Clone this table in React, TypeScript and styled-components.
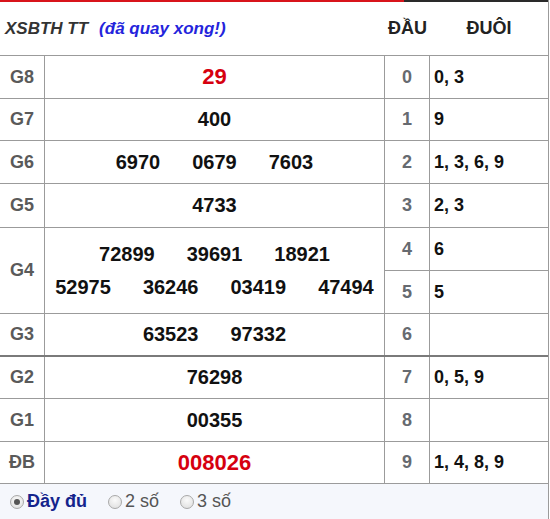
import React from "react";
import styled, { createGlobalStyle } from "styled-components";

const Global = createGlobalStyle`
  html, body { margin: 0; padding: 0; background: #ffffff; }
  body { font-family: "Liberation Sans", Arial, sans-serif; }
  * { box-sizing: border-box; }
`;

const LINE = "#9b9b9b";

const Widget = styled.div`
  width: 549px;
  border-right: 1px solid ${LINE};
  background: #fff;
`;

const TopBar = styled.div`
  display: flex;
  height: 2px;
`;

const TopSeg = styled.div<{ $color: string; $w?: number }>`
  height: 2px;
  background: ${(p) => p.$color};
  ${(p) => (p.$w ? `width: ${p.$w}px;` : "flex: 1;")}
`;

const Header = styled.div`
  display: flex;
  height: 54px;
  border-bottom: 1px solid ${LINE};
  align-items: center;
`;

const TitleCell = styled.div`
  width: 385px;
  padding-left: 5px;
  display: flex;
  align-items: center;
  white-space: nowrap;
`;

const Title = styled.span`
  font-style: italic;
  font-weight: bold;
  font-size: 17px;
  color: #333;
`;

const Status = styled.span`
  font-style: italic;
  font-weight: bold;
  font-size: 17px;
  color: #2424dc;
  margin-left: 11px;
`;

const HeadCell = styled.div<{ $w: number }>`
  width: ${(p) => p.$w}px;
  text-align: center;
  font-weight: bold;
  font-size: 18px;
  color: #222;
`;

const Row = styled.div<{ $h: number; $thick?: boolean }>`
  display: flex;
  height: ${(p) => p.$h}px;
  border-bottom: ${(p) => (p.$thick ? "2px solid #7a7a7a" : `1px solid ${LINE}`)};
`;

const Label = styled.div`
  width: 45px;
  border-right: 1px solid ${LINE};
  display: flex;
  align-items: center;
  justify-content: center;
  font-weight: bold;
  font-size: 18px;
  color: #5a5a5a;
`;

const Numbers = styled.div`
  width: 340px;
  border-right: 1px solid ${LINE};
  display: flex;
  flex-direction: column;
  align-items: center;
  justify-content: center;
`;

const NumLine = styled.div`
  display: flex;
  gap: 32px;
  height: 33px;
  align-items: center;
`;

const Num = styled.span<{ $special?: boolean }>`
  font-weight: bold;
  font-size: ${(p) => (p.$special ? "22px" : "20px")};
  color: ${(p) => (p.$special ? "#d6000f" : "#111")};
`;

const Side = styled.div`
  display: flex;
  flex-direction: column;
  flex: 1;
`;

const SubRow = styled.div<{ $divider?: boolean }>`
  display: flex;
  flex: 1;
  ${(p) => (p.$divider ? `border-bottom: 1px solid ${LINE};` : "")}
`;

const Dau = styled.div`
  width: 45px;
  border-right: 1px solid ${LINE};
  display: flex;
  align-items: center;
  justify-content: center;
  font-weight: bold;
  font-size: 18px;
  color: #666a70;
`;

const Duoi = styled.div`
  flex: 1;
  display: flex;
  align-items: center;
  padding-left: 4px;
  font-weight: bold;
  font-size: 18px;
  color: #111;
`;

const Options = styled.div`
  height: 35px;
  background: #f5f7fc;
  display: flex;
  align-items: center;
  padding-left: 10px;
`;

const Option = styled.label`
  display: flex;
  align-items: center;
  margin-right: 21px;
`;

const Radio = styled.span<{ $on?: boolean }>`
  width: 14px;
  height: 14px;
  border-radius: 50%;
  border: 1px solid #a9a9a9;
  background: radial-gradient(circle at 50% 35%, #fafafa 0%, #dcdcdc 100%);
  display: flex;
  align-items: center;
  justify-content: center;
  margin-right: 3px;
  &::after {
    content: "";
    width: 6px;
    height: 6px;
    border-radius: 50%;
    background: ${(p) => (p.$on ? "#555" : "transparent")};
  }
`;

const OptText = styled.span<{ $on?: boolean }>`
  font-size: 18px;
  font-weight: ${(p) => (p.$on ? "bold" : "normal")};
  color: ${(p) => (p.$on ? "#14248c" : "#555")};
`;

type Prize = {
  label: string;
  lines: string[][];
  h: number;
  special?: boolean;
  thick?: boolean;
  side: [string, string][];
};

const prizes: Prize[] = [
  { label: "G8", lines: [["29"]], h: 43, special: true, side: [["0", "0, 3"]] },
  { label: "G7", lines: [["400"]], h: 42, side: [["1", "9"]] },
  { label: "G6", lines: [["6970", "0679", "7603"]], h: 43, side: [["2", "1, 3, 6, 9"]] },
  { label: "G5", lines: [["4733"]], h: 44, side: [["3", "2, 3"]] },
  {
    label: "G4",
    lines: [
      ["72899", "39691", "18921"],
      ["52975", "36246", "03419", "47494"],
    ],
    h: 86,
    side: [
      ["4", "6"],
      ["5", "5"],
    ],
  },
  { label: "G3", lines: [["63523", "97332"]], h: 43, thick: true, side: [["6", ""]] },
  { label: "G2", lines: [["76298"]], h: 42, side: [["7", "0, 5, 9"]] },
  { label: "G1", lines: [["00355"]], h: 43, side: [["8", ""]] },
  { label: "ĐB", lines: [["008026"]], h: 42, special: true, side: [["9", "1, 4, 8, 9"]] },
];

export default function App() {
  return (
    <>
      <Global />
      <Widget>
        <TopBar>
          <TopSeg $color="#d8141b" $w={404} />
          <TopSeg $color="#2a2a2a" />
        </TopBar>
        <Header>
          <TitleCell>
            <Title>XSBTH TT</Title>
            <Status>(đã quay xong!)</Status>
          </TitleCell>
          <HeadCell $w={45}>ĐẦU</HeadCell>
          <HeadCell $w={118}>ĐUÔI</HeadCell>
        </Header>
        {prizes.map((p) => (
          <Row key={p.label} $h={p.h} $thick={p.thick}>
            <Label>{p.label}</Label>
            <Numbers>
              {p.lines.map((line, i) => (
                <NumLine key={i}>
                  {line.map((n) => (
                    <Num key={n} $special={p.special}>
                      {n}
                    </Num>
                  ))}
                </NumLine>
              ))}
            </Numbers>
            <Side>
              {p.side.map(([d, t], i) => (
                <SubRow key={d} $divider={i < p.side.length - 1}>
                  <Dau>{d}</Dau>
                  <Duoi>{t}</Duoi>
                </SubRow>
              ))}
            </Side>
          </Row>
        ))}
        <Options>
          <Option>
            <Radio $on />
            <OptText $on>Đầy đủ</OptText>
          </Option>
          <Option>
            <Radio />
            <OptText>2 số</OptText>
          </Option>
          <Option>
            <Radio />
            <OptText>3 số</OptText>
          </Option>
        </Options>
      </Widget>
    </>
  );
}
